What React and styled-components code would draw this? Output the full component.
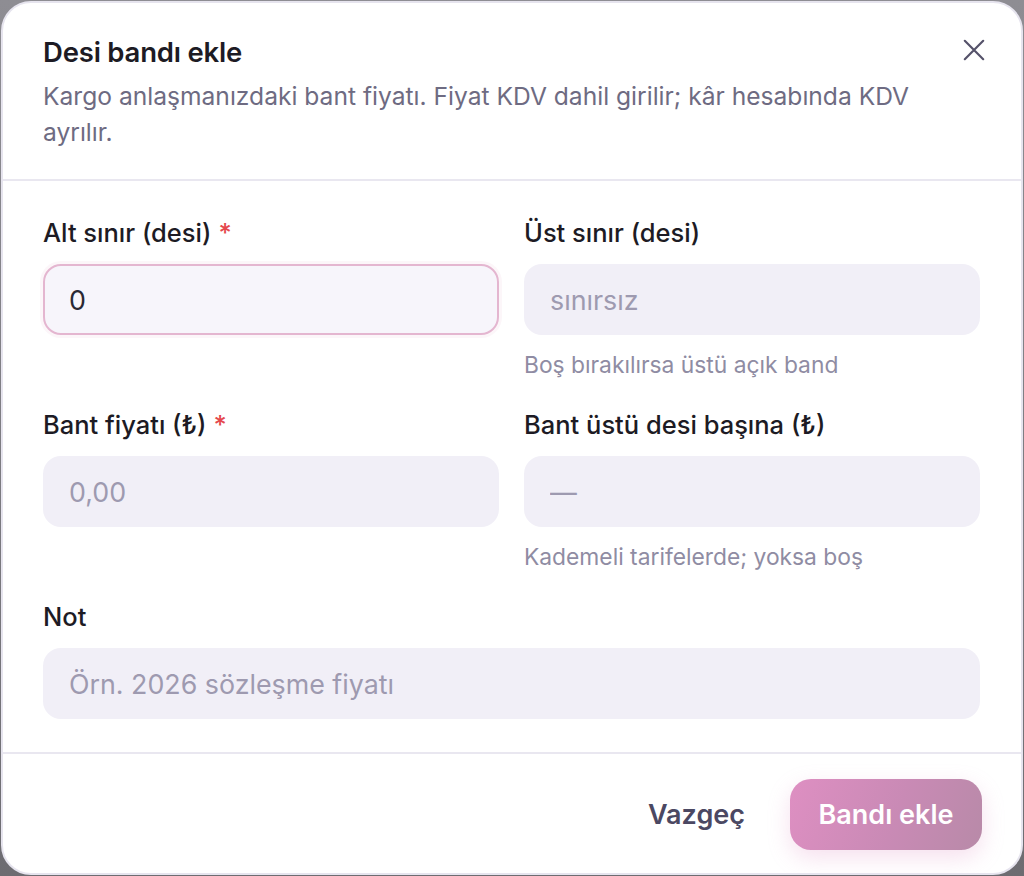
import styled, { createGlobalStyle } from "styled-components";

const GlobalStyle = createGlobalStyle`
  html, body {
    margin: 0;
    padding: 0;
  }
  body {
    font-family: Inter, "Noto Sans", "Liberation Sans", sans-serif;
    background: linear-gradient(180deg, #8e8d93 0%, #6d6c71 100%);
    min-height: 876px;
  }
  * { box-sizing: border-box; }
`;

const Overlay = styled.div`
  display: flex;
  justify-content: center;
  padding: 1px 1px 0 1px;
`;

const Dialog = styled.div`
  width: 1022px;
  background: #ffffff;
  border: 2px solid #e6e4ee;
  border-radius: 30px;
  display: flex;
  flex-direction: column;
  overflow: hidden;
`;

const Header = styled.div`
  position: relative;
  padding: 33px 41px 29px 40px;
  border-bottom: 2px solid #e9e7f0;
`;

const Title = styled.h2`
  margin: 0;
  font-size: 27.5px;
  line-height: 32px;
  font-weight: 600;
  color: #1d1b24;
  letter-spacing: -0.2px;
`;

const Description = styled.p`
  margin: 10px 0 0;
  max-width: 900px;
  font-size: 24.6px;
  line-height: 36px;
  color: #6e6b82;
`;

const CloseButton = styled.button`
  position: absolute;
  top: 32px;
  right: 32px;
  width: 30px;
  height: 30px;
  border: 0;
  background: transparent;
  padding: 0;
  display: flex;
  align-items: center;
  justify-content: center;
  color: #55526a;
  cursor: pointer;
`;

const Body = styled.div`
  padding: 38px 41px 33px 40px;
  display: grid;
  grid-template-columns: 1fr 1fr;
  column-gap: 25px;
  row-gap: 33px;
  border-bottom: 2px solid #e9e7f0;
`;

const Field = styled.div`
  display: flex;
  flex-direction: column;
  grid-column: ${(p) => (p.$wide ? "1 / -1" : "auto")};
`;

const Label = styled.label`
  font-size: 25.5px;
  line-height: 28px;
  font-weight: 500;
  color: #1d1b24;
  margin-bottom: 17px;
`;

const Required = styled.span`
  color: #e5484d;
  margin-left: 7px;
`;

const Input = styled.input`
  width: 100%;
  height: 71px;
  border-radius: 18px;
  border: 2px solid ${(p) => (p.$focused ? "#e4b6d0" : "transparent")};
  background: ${(p) => (p.$focused ? "#f7f5fb" : "#f1eff7")};
  padding: 0 24px;
  font-family: inherit;
  font-size: 26.8px;
  color: #2a2833;
  outline: none;
  box-shadow: ${(p) => (p.$focused ? "0 0 0 3px rgba(228, 182, 208, 0.12)" : "none")};

  &::placeholder {
    color: #9e9ab0;
  }
`;

const Hint = styled.div`
  margin-top: 17px;
  font-size: 22.8px;
  line-height: 26px;
  color: #8f8ca3;
`;

const Footer = styled.div`
  display: flex;
  justify-content: flex-end;
  align-items: center;
  gap: 45px;
  padding: 25px 39px 23px 40px;
`;

const GhostButton = styled.button`
  border: 0;
  background: transparent;
  font-family: inherit;
  font-size: 27px;
  font-weight: 600;
  color: #4b4862;
  padding: 0;
  cursor: pointer;
`;

const PrimaryButton = styled.button`
  border: 0;
  height: 71px;
  width: 192px;
  border-radius: 21px;
  background: linear-gradient(110deg, #de8fc2 0%, #c98ab5 55%, #b88aa8 100%);
  color: #ffffff;
  font-family: inherit;
  font-size: 27px;
  font-weight: 600;
  box-shadow: 0 8px 22px rgba(222, 143, 194, 0.28);
  cursor: pointer;
`;

const fields = [
  { label: "Alt sınır (desi)", required: true, value: "0", focused: true },
  { label: "Üst sınır (desi)", placeholder: "sınırsız", hint: "Boş bırakılırsa üstü açık band" },
  { label: "Bant fiyatı (₺)", required: true, placeholder: "0,00" },
  { label: "Bant üstü desi başına (₺)", placeholder: "—", hint: "Kademeli tarifelerde; yoksa boş" },
  { label: "Not", placeholder: "Örn. 2026 sözleşme fiyatı", wide: true },
];

const App = () => {
  return (
    <>
      <GlobalStyle />
      <Overlay>
        <Dialog>
          <Header>
            <Title>Desi bandı ekle</Title>
            <Description>
              Kargo anlaşmanızdaki bant fiyatı. Fiyat KDV dahil girilir; kâr hesabında KDV ayrılır.
            </Description>
            <CloseButton aria-label="Kapat">
              <svg width="26" height="26" viewBox="0 0 24 24" fill="none" stroke="currentColor" strokeWidth="2" strokeLinecap="round">
                <path d="M3.5 3.5l17 17M20.5 3.5l-17 17" />
              </svg>
            </CloseButton>
          </Header>
          <Body>
            {fields.map((f) => (
              <Field key={f.label} $wide={f.wide}>
                <Label>
                  {f.label}
                  {f.required && <Required>*</Required>}
                </Label>
                <Input
                  $focused={f.focused}
                  defaultValue={f.value}
                  placeholder={f.placeholder}
                />
                {f.hint && <Hint>{f.hint}</Hint>}
              </Field>
            ))}
          </Body>
          <Footer>
            <GhostButton>Vazgeç</GhostButton>
            <PrimaryButton>Bandı ekle</PrimaryButton>
          </Footer>
        </Dialog>
      </Overlay>
    </>
  );
};

export default App;
